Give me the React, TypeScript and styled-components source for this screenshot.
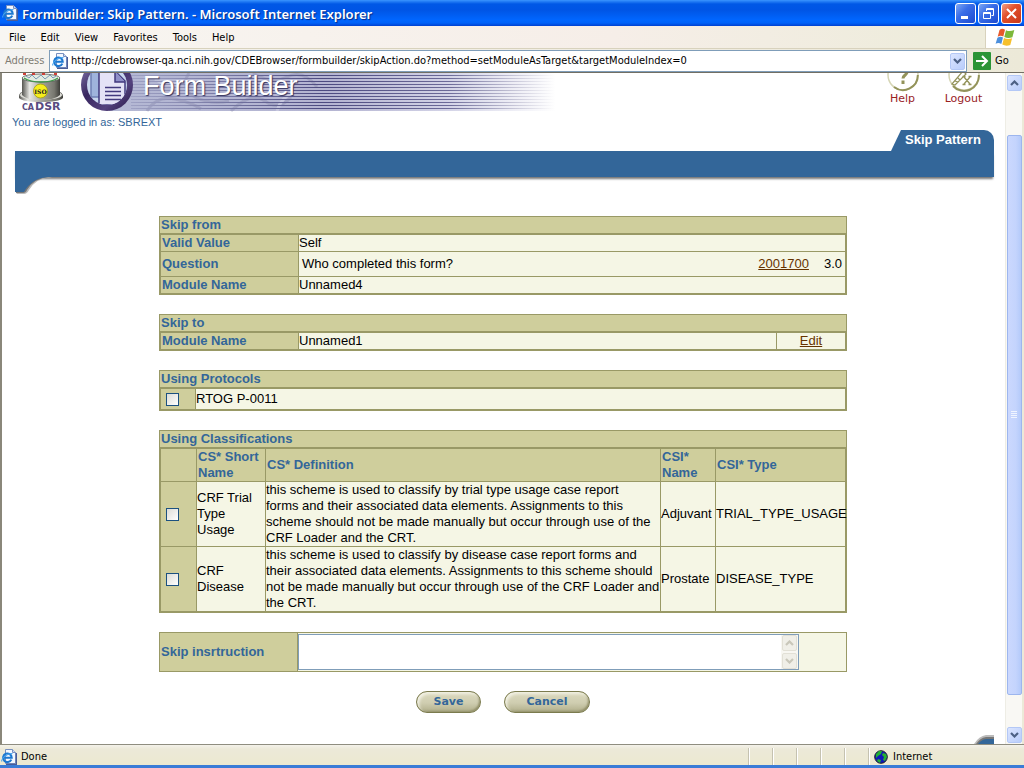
import React from "react";
import styled, { createGlobalStyle, css } from "styled-components";

const ui = `"DejaVu Sans Condensed", "DejaVu Sans", sans-serif`;
const sans = `"Liberation Sans", Arial, sans-serif`;
const verdana = `"DejaVu Sans", Verdana, sans-serif`;

const olive = "#999966";
const khaki = "#cfce9c";
const cream = "#f5f6e5";
const navy = "#336699";

const GlobalStyle = createGlobalStyle`
  *, *::before, *::after { box-sizing: border-box; }
  body { margin: 0; background: #ece9d8; font-family: ${sans}; }
  button, input, textarea { font: inherit; margin: 0; }
`;

const Window = styled.div`
  display: flex;
  flex-direction: column;
  height: 100vh;
  overflow: hidden;
  border-bottom: 3px solid #3a7cd6;
`;

/* ---------- browser chrome ---------- */

const TitleBar = styled.header`
  display: flex;
  align-items: center;
  flex: none;
  height: 26px;
  padding: 0 2px;
  gap: 4px;
  background: linear-gradient(#3c96ff 0, #2a84f8 1px, #0058e6 4px, #0055e5 10px, #0066ff 20px, #0062f8 23px, #0040d0 26px);
`;

const WindowTitle = styled.h1`
  flex: 1;
  margin: 0;
  padding-top: 1px;
  font: 600 13px/20px "Noto Sans", sans-serif;
  color: #fff;
  white-space: nowrap;
  text-shadow: 1px 1px 1px #0a2a80;
`;

const WindowButtons = styled.div`
  display: flex;
  gap: 2px;
`;

const WindowButton = styled.button<{ $danger?: boolean }>`
  display: flex;
  padding: 0;
  width: 21px;
  height: 21px;
  align-items: center;
  justify-content: center;
  border: 1px solid #fff;
  border-radius: 3px;
  background: ${(p) =>
    p.$danger
      ? "linear-gradient(135deg, #f0a088, #e2502c 40%, #c8381a)"
      : "linear-gradient(135deg, #7ea8f4, #3a6ee8 40%, #1c4ad0)"};
`;

const MenuRow = styled.div`
  display: flex;
  flex: none;
  height: 23px;
  background: linear-gradient(90deg, #f8f6f2, #f6eee8 60%, #eeecdc 90%);
  border-bottom: 1px solid #d8d2bd;
`;

const MenuBar = styled.nav`
  display: flex;
  flex: 1;
  align-items: center;
  padding: 2px 0 0 2px;
`;

const MenuButton = styled.button`
  padding: 0 7px;
  margin-right: 1px;
  border: 0;
  background: none;
  font: 11px/16px ${ui};
  color: #000;
`;

const Throbber = styled.div`
  display: flex;
  width: 39px;
  align-items: center;
  justify-content: center;
  border-left: 1px solid #d8d2bd;
  background: #fff;
`;

const AddressRow = styled.form`
  display: flex;
  flex: none;
  height: 24px;
  align-items: center;
  padding-top: 1px;
  background: linear-gradient(90deg, #f5f3f0, #f0ece2 60%, #ece9d8);
  border-bottom: 1px solid #716f64;
`;

const AddressLabel = styled.label`
  width: 49px;
  padding-left: 5px;
  font: 11px/16px ${ui};
  color: #7f7c73;
`;

const AddressBox = styled.div`
  display: flex;
  flex: 1;
  height: 22px;
  align-items: center;
  padding: 0 1px 0 2px;
  border: 1px solid #7f9db9;
  background: #fff;
`;

const AddressInput = styled.input`
  flex: 1;
  min-width: 0;
  height: 18px;
  padding: 0 3px;
  border: 0;
  outline: 0;
  background: #fff;
  font: 11px/18px ${ui};
  color: #000;
`;

const ArrowButton = styled.button<{ $muted?: boolean }>`
  display: flex;
  flex: none;
  align-items: center;
  justify-content: center;
  padding: 0;
  width: 15px;
  height: 17px;
  border: 1px solid ${(p) => (p.$muted ? "#e2e0d6" : "#b4c8f6")};
  border-radius: 2px;
  background: ${(p) => (p.$muted ? "#f0efe8" : "linear-gradient(135deg, #dbe5ff, #b9cdfb)")};
  color: ${(p) => (p.$muted ? "#c9c7ba" : "#4d6185")};
`;

const GoButton = styled.button`
  display: flex;
  align-items: center;
  gap: 4px;
  width: 57px;
  padding: 0 0 0 6px;
  border: 0;
  background: none;
  font: 11px/18px ${ui};
  color: #000;
`;

const Viewport = styled.div`
  display: flex;
  flex: 1;
  min-height: 0;
  border-left: 2px solid #8a877a;
  border-right: 2px solid #ece9d8;
  background: #fff;
`;

const ScrollTrack = styled.div`
  display: flex;
  flex-direction: column;
  align-items: center;
  flex: none;
  width: 17px;
  padding: 2px 0 1px;
  border-left: 1px solid #eeede5;
  background: #f9f8f4;

  ${ArrowButton} { height: 16px; }
`;

const Spacer = styled.div<{ $grow: number }>`
  flex: ${(p) => p.$grow} 0 0;
`;

const ScrollThumb = styled.div`
  display: flex;
  flex: 560 0 0;
  align-items: center;
  justify-content: center;
  width: 15px;
  border: 1px solid #9db6ee;
  border-radius: 2px;
  background: linear-gradient(90deg, #cbd8fe, #c4d4fd 60%, #b4cafa);
`;

const StatusBar = styled.footer`
  position: relative;
  display: flex;
  flex: none;
  height: 21px;
  border-top: 1px solid #8f8d80;
  background: linear-gradient(#f4f2ea, #ece9d8 4px, #ece9d0);
  padding: 3px 0 0;
  font: 11px/20px ${ui};
  color: #000;
`;

const StatusText = styled.div`
  display: flex;
  flex: 1;
  align-items: center;
  gap: 4px;
  padding-left: 1px;
`;

const StatusPane = styled.div<{ $wide?: boolean }>`
  display: flex;
  align-items: center;
  gap: 5px;
  width: ${(p) => (p.$wide ? "156px" : "24px")};
  padding-left: ${(p) => (p.$wide ? "5px" : "0")};
  border-left: 1px solid #c5c2b0;
  box-shadow: inset 1px 0 #fff;
`;

/* ---------- page ---------- */

const Page = styled.main`
  flex: 1;
  min-width: 0;
  display: flex;
  flex-direction: column;
  padding: 0 11px 0 10px;
`;

const Masthead = styled.div`
  display: flex;
  align-items: flex-start;
  height: 40px;
`;

const Banner = styled.div`
  position: relative;
  flex: 1;
`;

const BannerTitle = styled.h2`
  position: absolute;
  left: 62px;
  top: 0;
  margin: 0;
  font: 27px/27px ${sans};
  color: #fff;
  text-shadow: 1px 1px 1px #33325c;
  white-space: nowrap;
`;

const ToolLink = styled.a`
  display: flex;
  flex-direction: column;
  align-items: center;
  width: 61px;
  font: 11px/14px ${verdana};
  color: #99221f;
  text-decoration: none;
`;

const LoginNote = styled.p`
  margin: 2px 0 0;
  font: 11px/15px ${sans};
  color: ${navy};
`;

const TabRow = styled.div`
  display: flex;
  justify-content: flex-end;
`;

const Tab = styled.a`
  width: 103px;
  height: 21px;
  padding-left: 14px;
  background: ${navy};
  border-top-right-radius: 10px;
  clip-path: polygon(10px 0, 100% 0, 100% 100%, 0 100%);
  font: bold 13px/20px ${sans};
  color: #fff;
  text-decoration: none;
  white-space: nowrap;
`;

const NavBar = styled.div`
  height: 26px;
  margin-left: 3px;
  background: ${navy};
  box-shadow: 0 3px 2px -1px #777;
`;

const Hook = styled.svg`
  position: relative;
  display: block;
  flex: none;
`;

const Form = styled.form`
  display: flex;
  flex-direction: column;
  gap: 19px;
  width: 100%;
  max-width: 688px;
  margin: 19px auto 0;
`;

const heading = css`
  font: bold 13px/16px ${sans};
  color: ${navy};
  text-align: left;
`;

const Panel = styled.table`
  width: 100%;
  table-layout: fixed;
  border: 1px solid ${olive};
  border-spacing: 1px;
  background: ${olive};
  font: 13px/16px ${sans};
  color: #000;
`;

const PanelTitle = styled.caption`
  ${heading}
  padding-left: 1px;
  border: 1px solid ${olive};
  border-bottom: 0;
  background: ${khaki};
`;

const Col = styled.col<{ $w?: number }>`
  width: ${(p) => (p.$w ? `${p.$w}px` : "auto")};
`;

const Label = styled.th`
  ${heading}
  padding: 0 1px;
  background: ${khaki};
`;

const Value = styled.td<{ $center?: boolean }>`
  padding: 0;
  background: ${cream};
  text-align: ${(p) => (p.$center ? "center" : "left")};
  white-space: pre-line;
`;

const TickCell = styled.td`
  padding: 2px 5px;
  background: ${khaki};
`;

const ProtocolLabel = styled.label`
  display: block;
  line-height: 20px;
`;

const QuestionLine = styled.div`
  display: flex;
  align-items: center;
  gap: 15px;
  height: 24px;
  padding: 0 3px;
`;

const QuestionText = styled.span`
  flex: 1;
`;

const TextLink = styled.a`
  color: #663300;
  text-decoration: underline;
`;

const Tick = styled.input`
  display: block;
  appearance: none;
  width: 13px;
  height: 13px;
  border: 1px solid #1c5180;
  background: linear-gradient(135deg, #dcdcd7, #fff);
`;

const Instruction = styled.div`
  display: flex;
  height: 40px;
  border: 1px solid ${olive};
  background: ${cream};
`;

const InstructionLabel = styled.label`
  ${heading}
  flex: none;
  width: 138px;
  padding-left: 1px;
  border-right: 1px solid ${olive};
  background: ${khaki};
  line-height: 38px;
`;

const TextBox = styled.div`
  display: flex;
  width: 501px;
  height: 36px;
  margin: 1px 0;
  border: 1px solid #7f9db9;
  background: #fff;
`;

const TextArea = styled.textarea`
  flex: 1;
  min-width: 0;
  padding: 2px;
  border: 0;
  outline: 0;
  resize: none;
  overflow: hidden;
  background: #fff;
  font: 13px/16px ${sans};
`;

const MiniScroll = styled.div`
  display: flex;
  flex-direction: column;
  justify-content: space-between;
  width: 17px;
  padding: 0 1px;
  background: #f8f7f2;

  ${ArrowButton} { height: 16px; }
`;

const Actions = styled.div`
  display: flex;
  justify-content: center;
  gap: 23px;
`;

const PillButton = styled.button<{ $wide?: boolean }>`
  width: ${(p) => (p.$wide ? "86px" : "65px")};
  height: 22px;
  padding: 0;
  border: 1px solid #7b7b4e;
  border-radius: 11px;
  background: linear-gradient(#dcdabf, #cfcdb0 55%, #b0ae8a);
  box-shadow: inset 2px 2px 3px #f2f1e4, inset -1px -1px 2px #8f8d66;
  font: bold 11px/20px ${verdana};
  color: ${navy};
`;

const PageEnd = styled.div`
  display: flex;
  justify-content: flex-end;
  margin-top: auto;
`;

/* ---------- drawings ---------- */

const Chevron = ({ up }: { up?: boolean }) => (
  <svg width="9" height="6" viewBox="0 0 9 6" aria-hidden="true">
    <path d={up ? "M1 5L4.500 1.500L8 5" : "M1 1L4.500 4.500L8 1"} fill="none" stroke="currentColor" strokeWidth="2.200" />
  </svg>
);

const PageIcon = () => (
  <svg width="16" height="16" viewBox="0 0 16 16" aria-hidden="true">
    <path d="M4.500.5h7l3 3v11h-10z" fill="#f4f8ff" stroke="#7890c0" />
    <path d="M15.400 4v11.400H5" fill="none" stroke="#4a5c98" strokeWidth="1.200" />
    <path d="M11.500.5v3h3" fill="#c8d8f0" stroke="#7890c0" />
    <path d="M10.300 10.600A4.300 4.300 0 1 1 10.700 8.700H3.200" fill="none" stroke="#1c78d0" strokeWidth="2.100" />
    <path d="M1 12.500C-.5 10 6 4 11.500 4.500" fill="none" stroke="#48a4ee" strokeWidth="1.100" />
  </svg>
);

const WindowsFlag = () => (
  <svg width="20" height="19" viewBox="0 0 20 19" aria-hidden="true">
    <path d="M4.500 2Q7-.2 10 1.700L8.300 8.500Q5.500 6.900 2.700 8.700z" fill="#e8592b" />
    <path d="M11 2.200Q14.500 4 19.300 2L17.400 9.300Q13 10.800 9.300 9z" fill="#7cb83a" />
    <path d="M2.400 9.700Q5.500 8 8 9.500L6.300 16Q3.500 14.200.6 15.800z" fill="#4c8fdc" />
    <path d="M9 10Q12.500 11.800 17.100 10.300L15.300 17Q11 18.700 7.300 16.600z" fill="#f6c02c" />
  </svg>
);

const CadsrLogo = () => (
  <svg width="69" height="40" viewBox="0 0 69 40" aria-hidden="true">
    <defs>
      <linearGradient id="drum">
        <stop offset="0" stopColor="#555550" />
        <stop offset=".2" stopColor="#e8e8e4" />
        <stop offset=".5" stopColor="#a8a8a0" />
        <stop offset=".85" stopColor="#77776f" />
        <stop offset="1" stopColor="#3e3e3a" />
      </linearGradient>
    </defs>
    <path d="M7 23Q8 19 10 19h37q3 0 4 4v2q-4 4-22 4T7 25z" fill="url(#drum)" />
    <ellipse cx="29" cy="22" rx="21" ry="5" fill="#deded8" />
    <path d="M10 5v17q4 5 18.500 5T48 22V5z" fill="url(#drum)" />
    <ellipse cx="29" cy="5" rx="19" ry="4" fill="#e3ece0" stroke="#555" strokeWidth=".8" />
    <path d="M12 5q6 4 17 4t17-4" fill="none" stroke="#3c9a48" strokeWidth="1.300" />
    <path d="M14 3l3 2 3-3 4 4 5-4 4 4 5-4 3 3 3-2" fill="none" stroke="#7a9ab8" strokeWidth="1" />
    <path d="M11 1h3M20 1h3M30 1h3M42 1h3" stroke="#d04038" strokeWidth="2" />
    <circle cx="28.500" cy="18" r="7" fill="#f6ee1c" stroke="#a09a10" strokeWidth=".8" />
    <text x="28.500" y="20.500" textAnchor="middle" fontFamily="DejaVu Serif, serif" fontSize="6" fontWeight="bold" fill="#222">ISO</text>
    <text x="10" y="37" fontFamily="DejaVu Sans, sans-serif" fontSize="8" fontWeight="bold" fill="#594b80">CA</text>
    <text x="23" y="37" fontFamily="DejaVu Sans, sans-serif" fontSize="11" fontWeight="bold" fill="#594b80">DSR</text>
  </svg>
);

const BannerArt = () => (
  <svg width="490" height="40" viewBox="0 0 490 40" aria-hidden="true">
    <defs>
      <linearGradient id="wash">
        <stop offset="0" stopColor="#b4b8d4" />
        <stop offset=".5" stopColor="#b5b5d2" />
        <stop offset=".75" stopColor="#d2d2e6" />
        <stop offset="1" stopColor="#fff" />
      </linearGradient>
      <linearGradient id="rule" gradientUnits="userSpaceOnUse" x1="50" x2="474" y1="0" y2="0">
        <stop offset="0" stopColor="#9fa2c4" />
        <stop offset=".45" stopColor="#4c4a80" />
        <stop offset=".75" stopColor="#6c6a98" />
        <stop offset="1" stopColor="#fff" />
      </linearGradient>
      <linearGradient id="ring" x2="1" y2="1">
        <stop offset="0" stopColor="#8d83b8" />
        <stop offset=".4" stopColor="#38265f" />
        <stop offset=".7" stopColor="#54427e" />
        <stop offset="1" stopColor="#241444" />
      </linearGradient>
      <clipPath id="disc"><circle cx="26" cy="12" r="20" /></clipPath>
    </defs>
    <path d="M28 0h447v38H28z" fill="url(#wash)" />
    <g stroke="#77789f" strokeWidth="3" fill="none" opacity=".3">
      <path d="M66 38q10-16 28-12t26 10M108 0q-10 16 6 24t34 4M150 38q20-20 34-10t26-4M172 0q18 12 34 4t30 10" />
      <path d="M74 6q14 10 28 2M196 38q4-14 18-20" stroke="#eeeefa" />
    </g>
    <g fill="url(#rule)">
      {Array.from({ length: 12 }, (_, i) => (
        <rect key={i} x="50" y={2 + i * 3} width="424" height="1" />
      ))}
    </g>
    <circle cx="26" cy="12" r="26" fill="url(#ring)" />
    <circle cx="26" cy="12" r="20" fill="#c8d6ee" />
    <g clipPath="url(#disc)" stroke="#41397e" strokeWidth="1.500" fill="#e4e2f6">
      <path d="M10-6h22v30H10z" fill="#9fb4dc" stroke="#6f80b4" />
      <path d="M18-2h16l10 10v24H18z" />
      <path d="M34-2v11h10" fill="#8f8fc8" />
      <path d="M24 14.500h16M24 18.500h16M24 22.500h16M24 26.500h16" />
    </g>
  </svg>
);

const HelpIcon = () => (
  <svg width="34" height="19" viewBox="0 0 34 19" aria-hidden="true">
    <circle cx="17" cy="2" r="15" fill="#fff" stroke="#d5d5b5" strokeWidth="1.500" />
    <path d="M31.800 2A14.800 14.800 0 0 1 8 14" fill="none" stroke="#93935a" strokeWidth="2" />
    <path d="M12-1c0-5 9-5 9 0 0 3-4 3-4 6.500M17 7.500V11" fill="none" stroke="#93935a" strokeWidth="3" />
  </svg>
);

const LogoutIcon = () => (
  <svg width="34" height="19" viewBox="0 0 34 19" aria-hidden="true">
    <circle cx="17" cy="2" r="15" fill="#fff" stroke="#d5d5b5" strokeWidth="1.500" />
    <path d="M31.800 2A14.800 14.800 0 0 1 6 13" fill="none" stroke="#93935a" strokeWidth="2" />
    <path d="M5 11L16-2l3 3L8 12zM8 8l3 1M11 5l2 2" fill="none" stroke="#93935a" strokeWidth="1.200" />
    <path d="M17 4l6 7M23 4l-6 7M15.500 3.500h3M21.500 3.500h3M15.500 11.500h3M21.500 11.500h3" stroke="#93935a" strokeWidth="1.300" />
  </svg>
);

const Globe = () => (
  <svg width="14" height="14" viewBox="0 0 14 14" aria-hidden="true">
    <circle cx="7" cy="7" r="6.300" fill="#1018b8" stroke="#222" />
    <path d="M2 4l3-3h3L7 4 4 6 2 8zM9 3l3 1 1 3-2 4-2-1 1-3-2-2zM4 9l3 1-1 3-3-2z" fill="#22b030" />
  </svg>
);

/* ---------- content ---------- */

const menus = ["File", "Edit", "View", "Favorites", "Tools", "Help"];

const classifications = [
  {
    name: "CRF Trial Type Usage",
    definition:
      "this scheme is used to classify by trial type usage case report\nforms and their associated data elements. Assignments to this scheme should not be made manually but occur through use of the CRF Loader and the CRT.",
    item: "Adjuvant",
    type: "TRIAL_TYPE_USAGE",
  },
  {
    name: "CRF Disease",
    definition:
      "this scheme is used to classify by disease case report forms and their associated data elements. Assignments to this scheme should not be made manually but occur through use of the CRF Loader and the CRT.",
    item: "Prostate",
    type: "DISEASE_TYPE",
  },
];

export default function App() {
  return (
    <Window>
      <GlobalStyle />
      <TitleBar>
        <PageIcon />
        <WindowTitle>Formbuilder: Skip Pattern. - Microsoft Internet Explorer</WindowTitle>
        <WindowButtons>
          <WindowButton aria-label="Minimize">
            <svg width="13" height="13"><path d="M2 9h7v3H2z" fill="#fff" /></svg>
          </WindowButton>
          <WindowButton aria-label="Restore">
            <svg width="13" height="13" fill="none" stroke="#fff">
              <path d="M4.500 4V1.500h7v7h-2M4.500 2.500h7" /><path d="M1.500 5.500h7v6h-7zM1.500 6.500h7" />
            </svg>
          </WindowButton>
          <WindowButton $danger aria-label="Close">
            <svg width="13" height="13"><path d="M2 2l9 9M11 2l-9 9" stroke="#fff" strokeWidth="2" /></svg>
          </WindowButton>
        </WindowButtons>
      </TitleBar>

      <MenuRow>
        <MenuBar>
          {menus.map((m) => <MenuButton key={m}>{m}</MenuButton>)}
        </MenuBar>
        <Throbber><WindowsFlag /></Throbber>
      </MenuRow>

      <AddressRow onSubmit={(e) => e.preventDefault()}>
        <AddressLabel htmlFor="address">Address</AddressLabel>
        <AddressBox>
          <PageIcon />
          <AddressInput
            id="address"
            defaultValue="http://cdebrowser-qa.nci.nih.gov/CDEBrowser/formbuilder/skipAction.do?method=setModuleAsTarget&targetModuleIndex=0"
          />
          <ArrowButton type="button" aria-label="Address history"><Chevron /></ArrowButton>
        </AddressBox>
        <GoButton>
          <svg width="18" height="18" viewBox="0 0 18 18" aria-hidden="true">
            <rect width="18" height="18" rx="1" fill="#2b9436" />
            <path d="M3 9h11M9 4l5 5-5 5" fill="none" stroke="#fff" strokeWidth="2" />
          </svg>
          Go
        </GoButton>
      </AddressRow>

      <Viewport>
        <Page>
          <Masthead>
            <CadsrLogo />
            <Banner>
              <BannerArt />
              <BannerTitle>Form Builder</BannerTitle>
            </Banner>
            <ToolLink href="#help"><HelpIcon />Help</ToolLink>
            <ToolLink href="#logout"><LogoutIcon />Logout</ToolLink>
          </Masthead>
          <LoginNote>You are logged in as: SBREXT</LoginNote>
          <TabRow><Tab href="#skip">Skip Pattern</Tab></TabRow>
          <NavBar />
          <Hook width="40" height="20" viewBox="0 0 40 20" aria-hidden="true">
            <path d="M3 0h37Q24 1 17 13q-2 4-5 4H5l-2-3z" fill="#bbb" />
            <path d="M3 0h35Q22 1 15 13q-1 3-4 3H4z" fill="#777" />
            <path d="M3 0h33Q20 1 12 15H3z" fill={navy} />
          </Hook>

          <Form onSubmit={(e) => e.preventDefault()}>
            <Panel>
              <PanelTitle>Skip from</PanelTitle>
              <colgroup><Col $w={137} /><Col /></colgroup>
              <tbody>
                <tr><Label scope="row">Valid Value</Label><Value>Self</Value></tr>
                <tr>
                  <Label scope="row">Question</Label>
                  <Value>
                    <QuestionLine>
                      <QuestionText>Who completed this form?</QuestionText>
                      <TextLink href="#2001700">2001700</TextLink>
                      <span>3.0</span>
                    </QuestionLine>
                  </Value>
                </tr>
                <tr><Label scope="row">Module Name</Label><Value>Unnamed4</Value></tr>
              </tbody>
            </Panel>

            <Panel>
              <PanelTitle>Skip to</PanelTitle>
              <colgroup><Col $w={137} /><Col /><Col $w={68} /></colgroup>
              <tbody>
                <tr>
                  <Label scope="row">Module Name</Label>
                  <Value>Unnamed1</Value>
                  <Value $center><TextLink href="#edit">Edit</TextLink></Value>
                </tr>
              </tbody>
            </Panel>

            <Panel>
              <PanelTitle>Using Protocols</PanelTitle>
              <colgroup><Col $w={34} /><Col /></colgroup>
              <tbody>
                <tr>
                  <TickCell><Tick type="checkbox" id="protocol" /></TickCell>
                  <Value><ProtocolLabel htmlFor="protocol">RTOG P-0011</ProtocolLabel></Value>
                </tr>
              </tbody>
            </Panel>

            <Panel>
              <PanelTitle>Using Classifications</PanelTitle>
              <colgroup><Col $w={35} /><Col $w={68} /><Col /><Col $w={54} /><Col $w={129} /></colgroup>
              <thead>
                <tr>
                  <TickCell />
                  <Label scope="col">CS* Short Name</Label>
                  <Label scope="col">CS* Definition</Label>
                  <Label scope="col">CSI* Name</Label>
                  <Label scope="col">CSI* Type</Label>
                </tr>
              </thead>
              <tbody>
                {classifications.map((c) => (
                  <tr key={c.name}>
                    <TickCell><Tick type="checkbox" aria-label={c.name} /></TickCell>
                    <Value>{c.name}</Value>
                    <Value>{c.definition}</Value>
                    <Value>{c.item}</Value>
                    <Value>{c.type}</Value>
                  </tr>
                ))}
              </tbody>
            </Panel>

            <Instruction>
              <InstructionLabel htmlFor="instruction">Skip insrtruction</InstructionLabel>
              <TextBox>
                <TextArea id="instruction" />
                <MiniScroll>
                  <ArrowButton type="button" $muted aria-label="Scroll text up"><Chevron up /></ArrowButton>
                  <ArrowButton type="button" $muted aria-label="Scroll text down"><Chevron /></ArrowButton>
                </MiniScroll>
              </TextBox>
            </Instruction>

            <Actions>
              <PillButton>Save</PillButton>
              <PillButton $wide type="reset">Cancel</PillButton>
            </Actions>
          </Form>

          <PageEnd>
            <svg width="20" height="9" viewBox="0 0 20 9" aria-hidden="true">
              <path d="M0 9Q5 1 12 0h8v9z" fill="#bbb" />
              <path d="M2 9Q6 3 12 2h8v7z" fill="#777" />
              <path d="M4 9Q8 4 13 4h7v5z" fill={navy} />
            </svg>
          </PageEnd>
        </Page>

        <ScrollTrack>
          <ArrowButton type="button" aria-label="Scroll up"><Chevron up /></ArrowButton>
          <Spacer $grow={44} />
          <ScrollThumb>
            <svg width="7" height="8" stroke="#f0f5ff"><path d="M0 .5h6M0 2.500h6M0 4.500h6M0 6.500h6" /></svg>
          </ScrollThumb>
          <Spacer $grow={32} />
          <ArrowButton type="button" aria-label="Scroll down"><Chevron /></ArrowButton>
        </ScrollTrack>
      </Viewport>

      <StatusBar>
        <StatusText><PageIcon />Done</StatusText>
        <StatusPane /><StatusPane /><StatusPane /><StatusPane /><StatusPane />
        <StatusPane $wide><Globe />Internet</StatusPane>
      </StatusBar>
    </Window>
  );
}
